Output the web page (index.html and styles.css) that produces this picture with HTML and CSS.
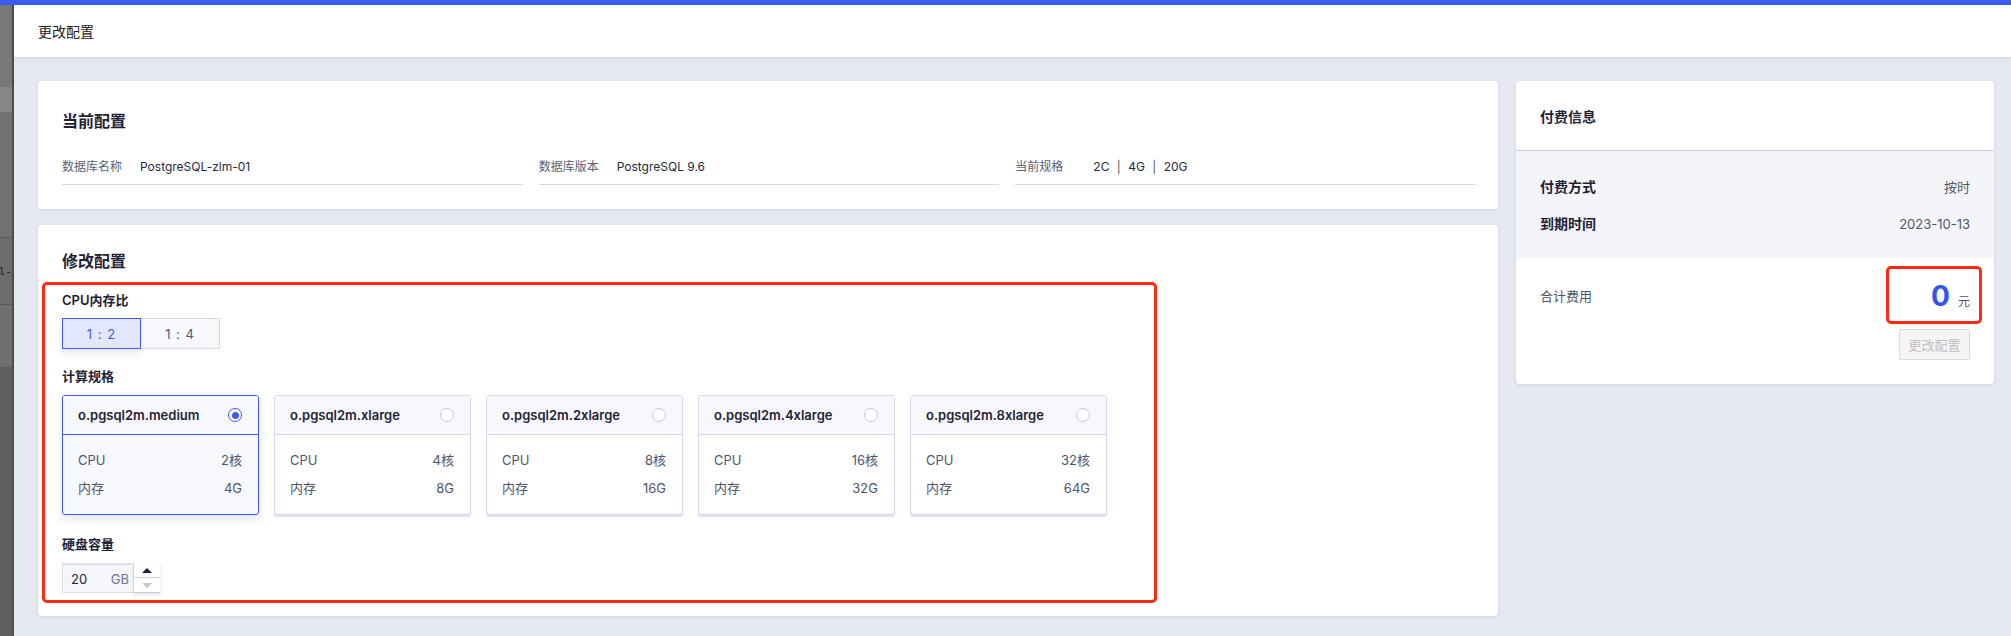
FILE: index.html
```html
<!DOCTYPE html>
<html lang="zh-CN">
<head>
<meta charset="utf-8">
<title>更改配置</title>
<link rel="stylesheet" href="styles.css">
</head>
<body>
<div class="topbar"></div>
<div class="layout">
  <aside class="backdrop">
    <div class="bd bd1"></div>
    <div class="bd bd2"></div>
    <div class="bd bd3"></div>
    <div class="bd bd4"><span class="bd-text">l-</span></div>
    <div class="bd bd5"></div>
    <div class="bd bd6"></div>
  </aside>
  <div class="drawer">
    <header class="drawer-header">更改配置</header>
    <main class="drawer-body">
      <div class="col-main">
        <section class="card card-current">
          <h2 class="card-title">当前配置</h2>
          <div class="fields">
            <div class="field"><span class="field-label">数据库名称</span><span class="field-value">PostgreSQL-zlm-01</span></div>
            <div class="field"><span class="field-label">数据库版本</span><span class="field-value">PostgreSQL 9.6</span></div>
            <div class="field"><span class="field-label">当前规格</span><span class="field-value">2C <span class="sep">|</span> 4G <span class="sep">|</span> 20G</span></div>
          </div>
        </section>
        <section class="card card-modify">
          <h2 class="card-title">修改配置</h2>
          <div class="highlight-box">
            <div class="form-label">CPU内存比</div>
            <div class="seg">
              <button class="seg-btn active">1 : 2</button>
              <button class="seg-btn">1 : 4</button>
            </div>
            <div class="form-label">计算规格</div>
            <div class="spec-list">
              <div class="spec selected">
                <div class="spec-head"><span class="spec-name">o.pgsql2m.medium</span><span class="radio on"></span></div>
                <div class="spec-body">
                  <div class="spec-row"><span>CPU</span><span>2核</span></div>
                  <div class="spec-row"><span>内存</span><span>4G</span></div>
                </div>
              </div>
              <div class="spec">
                <div class="spec-head"><span class="spec-name">o.pgsql2m.xlarge</span><span class="radio"></span></div>
                <div class="spec-body">
                  <div class="spec-row"><span>CPU</span><span>4核</span></div>
                  <div class="spec-row"><span>内存</span><span>8G</span></div>
                </div>
              </div>
              <div class="spec">
                <div class="spec-head"><span class="spec-name">o.pgsql2m.2xlarge</span><span class="radio"></span></div>
                <div class="spec-body">
                  <div class="spec-row"><span>CPU</span><span>8核</span></div>
                  <div class="spec-row"><span>内存</span><span>16G</span></div>
                </div>
              </div>
              <div class="spec">
                <div class="spec-head"><span class="spec-name">o.pgsql2m.4xlarge</span><span class="radio"></span></div>
                <div class="spec-body">
                  <div class="spec-row"><span>CPU</span><span>16核</span></div>
                  <div class="spec-row"><span>内存</span><span>32G</span></div>
                </div>
              </div>
              <div class="spec">
                <div class="spec-head"><span class="spec-name">o.pgsql2m.8xlarge</span><span class="radio"></span></div>
                <div class="spec-body">
                  <div class="spec-row"><span>CPU</span><span>32核</span></div>
                  <div class="spec-row"><span>内存</span><span>64G</span></div>
                </div>
              </div>
            </div>
            <div class="form-label">硬盘容量</div>
            <div class="disk">
              <div class="disk-input"><span class="disk-val">20</span><span class="disk-unit">GB</span></div>
              <div class="spinner"><span class="spin up"></span><span class="spin down"></span></div>
            </div>
          </div>
        </section>
      </div>
      <aside class="col-side">
        <section class="card pay-card">
          <div class="pay-head">付费信息</div>
          <div class="pay-info">
            <div class="pay-row"><span class="pay-label">付费方式</span><span class="pay-value">按时</span></div>
            <div class="pay-row"><span class="pay-label">到期时间</span><span class="pay-value">2023-10-13</span></div>
          </div>
          <div class="pay-total">
            <div class="total-row">
              <span class="total-label">合计费用</span>
              <div class="price-box"><span class="price-num">0</span><span class="price-unit">元</span></div>
            </div>
            <button class="btn-submit" disabled>更改配置</button>
          </div>
        </section>
      </aside>
    </main>
  </div>
</div>
</body>
</html>
```

FILE: styles.css
```css
* { box-sizing: border-box; }
html, body { margin: 0; padding: 0; }
body {
  width: 2011px;
  height: 636px;
  overflow: hidden;
  background: #e6e9f2;
  font-family: Inter, "Noto Sans CJK SC", sans-serif;
  color: #1f2335;
  font-size: 13px;
}
.topbar { height: 5px; background: #3b5bf3; }
.layout { display: flex; height: 631px; }

/* backdrop strip of page behind the drawer */
.backdrop {
  width: 14px;
  flex: none;
  display: flex;
  flex-direction: column;
  border-right: 2px solid #4d4d4d;
  overflow: hidden;
}
.bd { flex: none; }
.bd1 { height: 82px; background: #787878; }
.bd2 { height: 25px; background: #868686; }
.bd3 { height: 125px; background: #717171; }
.bd4 { height: 67px; background: #6c6c6c; border-top: 1px solid #5a5a5a; display: flex; align-items: center; justify-content: flex-end; }
.bd5 { height: 63px; background: #6f6f6f; border-top: 1px solid #5a5a5a; }
.bd6 { flex: 1; background: #5f5f5f; }
.bd-text { font-family: "DejaVu Sans Mono", monospace; font-size: 11px; color: #222; line-height: 1; }

.drawer { flex: 1; display: flex; flex-direction: column; min-width: 0; }
.drawer-header {
  height: 52px;
  flex: none;
  background: #fff;
  display: flex;
  align-items: center;
  padding-left: 24px;
  font-size: 14px;
  color: #222;
  box-shadow: 0 2px 6px rgba(30, 40, 80, 0.08);
  position: relative;
  z-index: 1;
}
.drawer-body {
  display: flex;
  gap: 18px;
  align-items: flex-start;
  padding: 24px 17px 0 24px;
}
.col-main { width: 1460px; flex: none; display: flex; flex-direction: column; gap: 16px; }
.col-side { width: 478px; flex: none; }

.card {
  background: #fff;
  border-radius: 4px;
  box-shadow: 0 1px 4px rgba(30, 40, 80, 0.10);
}
.card-title {
  margin: 0;
  font-size: 16px;
  font-weight: 700;
  line-height: 22px;
  color: #1f2335;
}

/* current config */
.card-current { height: 128px; padding: 29px 22px 0 24px; }
.fields {
  display: grid;
  grid-template-columns: repeat(3, 1fr);
  gap: 16px;
  margin-top: 25px;
}
.field {
  display: flex;
  align-items: center;
  line-height: 20px;
  padding-bottom: 7px;
  border-bottom: 1px solid #d6d9e8;
  font-size: 12px;
}
.field-label { width: 78px; flex: none; color: #5b6072; }
.field-value { color: #262a3a; }
.sep { color: #555; margin: 0 4px; }

/* modify config */
.card-modify { padding: 25px 0 13px 4px; }
.card-modify .card-title { margin-left: 20px; }
.highlight-box {
  width: 1115px;
  margin-top: 10px;
  border: 3px solid #ff2a12;
  border-radius: 5px;
  padding: 6px 17px 7px;
}
.form-label {
  font-size: 13px;
  font-weight: 600;
  line-height: 18px;
  color: #1f2335;
}
.seg { display: flex; margin: 9px 0 18px; }
.seg-btn {
  width: 79px;
  height: 31px;
  font-family: inherit;
  font-size: 13px;
  border: 1px solid #d3d7e8;
  background: #f7f8fc;
  color: #555b70;
  padding: 0;
  letter-spacing: 1px;
}
.seg-btn + .seg-btn { border-left: none; }
.seg-btn.active {
  background: #e2e7fd;
  border-color: #3d5af1;
  color: #3d5af1;
  box-shadow: 0 4px 8px rgba(30, 50, 150, 0.12);
}

.spec-list { display: flex; gap: 15px; margin: 10px 0 20px; }
.spec {
  width: 197px;
  height: 120px;
  border: 1px solid #d3d7ea;
  border-radius: 3px;
  background: #fff;
  box-shadow: 0 2px 0 #dfe3f7;
  overflow: hidden;
}
.spec-head {
  height: 39px;
  background: #f7f8fc;
  border-bottom: 1px solid #d3d7ea;
  display: flex;
  align-items: center;
  justify-content: space-between;
  padding: 0 16px 0 15px;
}
.spec-name { font-size: 13px; font-weight: 600; color: #1f2335; }
.spec-body { padding: 15px 16px 0 15px; display: flex; flex-direction: column; gap: 8px; }
.spec-row {
  display: flex;
  justify-content: space-between;
  line-height: 20px;
  font-size: 13px;
  color: #4f566b;
}
.radio {
  width: 14px;
  height: 14px;
  border-radius: 50%;
  border: 1px solid #c4c8da;
  background: #fff;
  display: flex;
  align-items: center;
  justify-content: center;
}
.radio.on { border-color: #3d5af1; }
.radio.on::after {
  content: "";
  width: 7px;
  height: 7px;
  border-radius: 50%;
  background: #3d5af1;
}
.spec.selected {
  border-color: #3d5af1;
  background: #f7f8fc;
  box-shadow: 0 4px 10px rgba(20, 30, 80, 0.12);
}
.spec.selected .spec-head { border-bottom-color: #3d5af1; }

.disk { display: flex; margin-top: 10px; }
.disk-input {
  width: 72px;
  height: 30px;
  background: #f5f6fa;
  border: 1px solid #dcdfeb;
  border-top: 2px solid #e1e3ec;
  display: flex;
  align-items: center;
  justify-content: space-between;
  padding: 0 4px 0 8px;
  font-size: 13px;
}
.disk-val { color: #1f2335; }
.disk-unit { color: #6b7398; }
.spinner {
  width: 26px;
  height: 30px;
  display: flex;
  flex-direction: column;
  background: #fff;
  box-shadow: 0 2px 4px rgba(0, 0, 0, 0.12);
  border-bottom: 1px solid #c8cde3;
}
.spin { flex: 1; display: flex; align-items: center; justify-content: center; }
.spin.up { border-bottom: 1px solid #c8cde3; }
.spin.up::before {
  content: "";
  border-left: 5px solid transparent;
  border-right: 5px solid transparent;
  border-bottom: 5px solid #1f2335;
}
.spin.down::before {
  content: "";
  border-left: 5px solid transparent;
  border-right: 5px solid transparent;
  border-top: 5px solid #c4c6d0;
}

/* payment card */
.pay-card { overflow: hidden; }
.pay-head {
  height: 70px;
  border-bottom: 1px solid #c5cbde;
  display: flex;
  align-items: center;
  padding-left: 24px;
  font-size: 14px;
  font-weight: 700;
  color: #1f2335;
}
.pay-info {
  background: #f4f5f9;
  padding: 26px 24px 24px;
  display: flex;
  flex-direction: column;
  gap: 17px;
}
.pay-row {
  display: flex;
  justify-content: space-between;
  align-items: center;
  line-height: 20px;
}
.pay-label { font-size: 14px; font-weight: 700; color: #1f2335; }
.pay-value { font-size: 13px; color: #4e5569; }
.pay-total {
  padding: 8px 12px 24px 24px;
  display: flex;
  flex-direction: column;
}
.total-row { display: flex; justify-content: space-between; align-items: center; }
.total-label { font-size: 13px; color: #4e5569; }
.price-box {
  width: 96px;
  height: 58px;
  border: 3px solid #ff2a12;
  border-radius: 5px;
  display: flex;
  justify-content: flex-end;
  align-items: baseline;
  padding: 13px 9px 0 0;
}
.price-num { font-size: 28px; font-weight: 700; color: #3355ee; line-height: 28px; }
.price-unit { font-size: 12px; margin-left: 8px; color: #4e5569; }
.btn-submit {
  align-self: flex-end;
  margin: 5px 12px 0 0;
  width: 71px;
  height: 31px;
  border: 1px solid #d9d9d9;
  border-radius: 2px;
  background: #f5f5f5;
  color: #bfbfbf;
  font-family: inherit;
  font-size: 13px;
  padding: 0;
}
```
